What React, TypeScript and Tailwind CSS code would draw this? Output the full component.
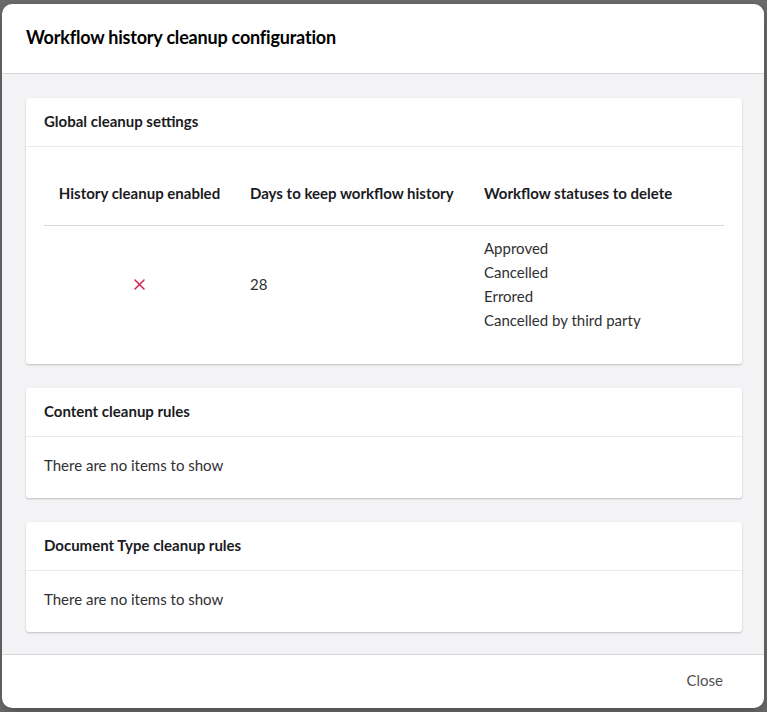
import React from 'react';

const STATUSES = ['Approved', 'Cancelled', 'Errored', 'Cancelled by third party'];

const Card: React.FC<{ title: string; children: React.ReactNode }> = ({ title, children }) => (
  <div className="bg-white rounded-[3px] shadow-[0_1px_2px_rgba(0,0,0,0.22)]">
    <div className="h-[49px] flex items-center px-[18px] pb-[2px] border-b border-[#e9e9eb] text-[15px] font-bold text-[#1b1b1f]">
      {title}
    </div>
    {children}
  </div>
);

const Cross = () => (
  <svg width="11" height="11" viewBox="0 0 11 11" className="text-[#d42054]">
    <path d="M1 1L10 10M10 1L1 10" stroke="currentColor" strokeWidth="1.5" strokeLinecap="round" />
  </svg>
);

export default function App() {
  return (
    <div
      className="w-[767px] h-[712px] bg-[#6d6d6d] pt-[4px] pl-[2px] pr-[3px] pb-[4px] text-[#303033]"
      style={{ fontFamily: 'Lato, "Open Sans", sans-serif' }}
    >
      <div className="h-full bg-white rounded-[10px] overflow-hidden flex flex-col shadow-[0_4px_14px_rgba(0,0,0,0.3)]">
        {/* Header */}
        <div className="h-[70px] shrink-0 flex items-center px-[24px] border-b border-[#d8d7d9]">
          <h1 className="text-[18px] font-bold text-black tracking-[-0.2px] pb-[2px]">
            Workflow history cleanup configuration
          </h1>
        </div>

        {/* Body */}
        <div className="flex-1 bg-[#f3f3f5] pl-[24px] pr-[22px] pt-[24px] flex flex-col gap-[24px]">
          <Card title="Global cleanup settings">
            <div className="px-[18px] pt-[16px] pb-[22px]">
              <div className="grid grid-cols-[191px_234px_1fr] border-b border-[#d8d7d9] text-[15px] font-bold text-[#1b1b1f]">
                <div className="pt-[20px] pb-[22px] text-center leading-[20px]">History cleanup enabled</div>
                <div className="pt-[20px] pb-[22px] px-[15px] leading-[20px]">Days to keep workflow history</div>
                <div className="pt-[20px] pb-[22px] px-[15px] leading-[20px]">Workflow statuses to delete</div>
              </div>
              <div className="grid grid-cols-[191px_234px_1fr] text-[15px] text-[#303033]">
                <div className="flex items-center justify-center">
                  <Cross />
                </div>
                <div className="flex items-center px-[15px]">28</div>
                <div className="px-[15px] py-[10px] leading-[24px]">
                  {STATUSES.map((s) => (
                    <div key={s}>{s}</div>
                  ))}
                </div>
              </div>
            </div>
          </Card>

          <Card title="Content cleanup rules">
            <div className="px-[18px] pt-[18px] pb-[23px] leading-[20px] text-[15px]">There are no items to show</div>
          </Card>

          <Card title="Document Type cleanup rules">
            <div className="px-[18px] pt-[18px] pb-[23px] leading-[20px] text-[15px]">There are no items to show</div>
          </Card>
        </div>

        {/* Footer */}
        <div className="h-[54px] shrink-0 border-t border-[#d8d7d9] flex items-center justify-end px-[24px]">
          <button className="px-[17px] py-[6px] text-[15px] text-[#515054] pb-[8px]">Close</button>
        </div>
      </div>
    </div>
  );
}
